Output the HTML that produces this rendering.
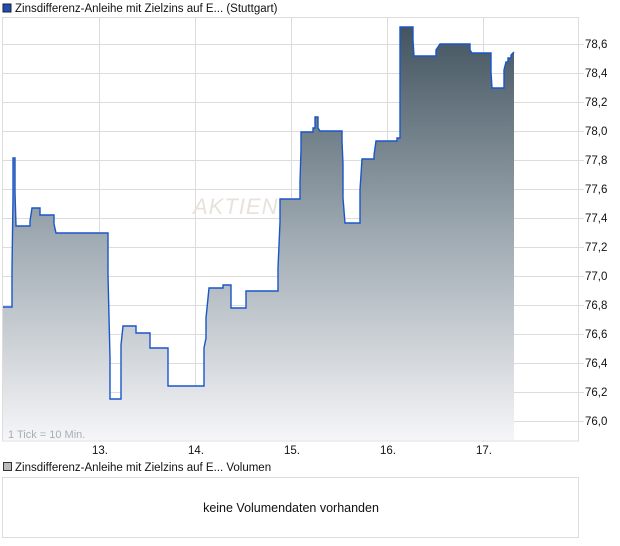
<!DOCTYPE html>
<html><head><meta charset="utf-8"><style>
body{margin:0;background:#fff;width:620px;height:546px;overflow:hidden;font-family:"Liberation Sans",Arial,sans-serif;}
</style></head><body>
<svg width="620" height="546" xmlns="http://www.w3.org/2000/svg" style="position:absolute;left:0;top:0">
<defs><linearGradient id="g" x1="0" y1="27" x2="0" y2="441" gradientUnits="userSpaceOnUse">
<stop offset="0" stop-color="#435460"/><stop offset="0.5" stop-color="#9ea9b1"/><stop offset="1" stop-color="#f6f6f8"/></linearGradient></defs>
<rect x="3" y="4" width="8" height="8" fill="#1f4fb0" stroke="#222" stroke-width="1"/>
<text x="15" y="12" font-size="11.5" fill="#111">Zinsdifferenz-Anleihe mit Zielzins auf E... (Stuttgart)</text>
<g stroke="#dcdcdc" stroke-width="1" fill="none">
<rect x="2.5" y="17.5" width="576" height="423.5"/>
<path d="M99.5 17V441M195.5 17V441M291.5 17V441M387.5 17V441M483.5 17V441"/>
<path d="M2 44.5H584M2 73.5H584M2 102.5H584M2 131.5H584M2 160.5H584M2 189.5H584M2 218.5H584M2 247.5H584M2 276.5H584M2 305.5H584M2 334.5H584M2 363.5H584M2 392.5H584M2 421.5H584"/>
</g>
<text x="193" y="214" font-size="22" fill="#e8e2dc" font-style="italic" letter-spacing="1">AKTIEN</text>
<path id="p" d="M3 307H12V270L13 197V158H15V192L16 226H30V221L32 208H40V215H54V224L56 233H108V275L110 358V399H121V345L123 326H136V333H150V348H168V386H204V348L206 338V318L209 288H223V285H231V308H246V291H278V268L280 222V199H300V182L301 149V132H313V128H315V117H318V128L320 131H342V141L343 164V198L345 223H360V190L362 159H374V155L376 141H397V138H400V27H413V40L414 56H436V50L440 44H470V50L472 53H491V72L492 88H504V70L506 62H508V58H511V55L514 52V440H3Z" fill="url(#g)"/>
<path d="M3 307H12V270L13 197V158H15V192L16 226H30V221L32 208H40V215H54V224L56 233H108V275L110 358V399H121V345L123 326H136V333H150V348H168V386H204V348L206 338V318L209 288H223V285H231V308H246V291H278V268L280 222V199H300V182L301 149V132H313V128H315V117H318V128L320 131H342V141L343 164V198L345 223H360V190L362 159H374V155L376 141H397V138H400V27H413V40L414 56H436V50L440 44H470V50L472 53H491V72L492 88H504V70L506 62H508V58H511V55L514 52" fill="none" stroke="#1a56c8" stroke-width="1.4"/>
<text x="8" y="438" font-size="11" fill="#a8aeb8">1 Tick = 10 Min.</text>
<g font-size="11.5" fill="#111">
<text x="585" y="48">78,6</text><text x="585" y="77">78,4</text><text x="585" y="106">78,2</text><text x="585" y="135">78,0</text><text x="585" y="164">77,8</text><text x="585" y="193">77,6</text><text x="585" y="222">77,4</text><text x="585" y="251">77,2</text><text x="585" y="280">77,0</text><text x="585" y="309">76,8</text><text x="585" y="338">76,6</text><text x="585" y="367">76,4</text><text x="585" y="396">76,2</text><text x="585" y="425">76,0</text>
</g>
<g font-size="11.5" fill="#111" text-anchor="middle">
<text x="100" y="454">13.</text><text x="196" y="454">14.</text><text x="292" y="454">15.</text><text x="388" y="454">16.</text><text x="484" y="454">17.</text>
</g>
<rect x="3.5" y="462.5" width="8" height="8" fill="#bbb" stroke="#333" stroke-width="1"/>
<text x="15" y="471" font-size="11.5" fill="#111">Zinsdifferenz-Anleihe mit Zielzins auf E... Volumen</text>
<rect x="2.5" y="477.5" width="576" height="60" fill="#fff" stroke="#dcdcdc"/>
<text x="291" y="512" font-size="12.5" fill="#111" text-anchor="middle">keine Volumendaten vorhanden</text>
</svg>
</body></html>
